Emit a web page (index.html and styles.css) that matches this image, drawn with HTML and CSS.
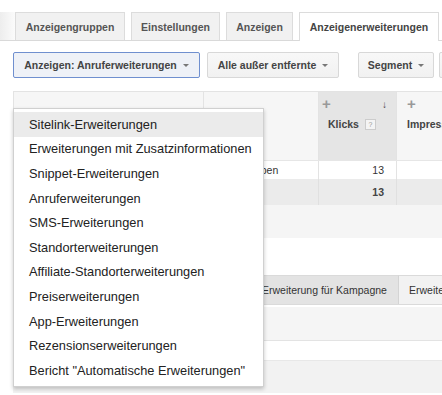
FILE: index.html
```html
<!DOCTYPE html>
<html lang="de">
<head>
<meta charset="utf-8">
<title>Anzeigenerweiterungen</title>
<link rel="stylesheet" href="styles.css">
</head>
<body>
<div class="page">
  <div class="tabs">
    <div class="tabs-lead"></div>
    <div class="tab tab-1">Anzeigengruppen</div>
    <div class="tab tab-2">Einstellungen</div>
    <div class="tab tab-3">Anzeigen</div>
    <div class="tab tab-4 tab-active">Anzeigenerweiterungen</div>
  </div>

  <div class="toolbar">
    <div class="btn btn-view">Anzeigen: Anruferweiterungen <span class="caret"></span></div>
    <div class="btn btn-filter">Alle außer entfernte <span class="caret"></span></div>
    <div class="sep"></div>
    <div class="btn btn-segment">Segment <span class="caret"></span></div>
    <div class="btn btn-more"></div>
  </div>

  <div class="grid">
    <div class="row row-head">
      <div class="cell c1"></div>
      <div class="cell c2"></div>
      <div class="cell c3 sorted">
        <div class="head-top"><span class="plus">+</span><span class="sort">&#8595;</span></div>
        <div class="head-label">Klicks <span class="help">?</span></div>
      </div>
      <div class="cell c4">
        <div class="head-top"><span class="plus">+</span></div>
        <div class="head-label">Impressionen</div>
      </div>
    </div>
    <div class="row row-data">
      <div class="cell c1"></div>
      <div class="cell c2">Werbegruppen</div>
      <div class="cell c3 num">13</div>
      <div class="cell c4"></div>
    </div>
    <div class="row row-total">
      <div class="cell c1"></div>
      <div class="cell c2"></div>
      <div class="cell c3 num">13</div>
      <div class="cell c4"></div>
    </div>
    <div class="row row-sub"></div>
  </div>

  <div class="gap"></div>

  <div class="subtabs">
    <div class="subtab subtab-a"></div>
    <div class="subtab subtab-b">Erweiterung für Kampagne</div>
    <div class="subtab subtab-c">Erweiterung für Konto</div>
  </div>
  <div class="band band-grey"></div>
  <div class="band band-white"></div>
  <div class="band band-foot"></div>

  <ul class="menu">
    <li class="menu-item is-hover">Sitelink-Erweiterungen</li>
    <li class="menu-item">Erweiterungen mit Zusatzinformationen</li>
    <li class="menu-item">Snippet-Erweiterungen</li>
    <li class="menu-item">Anruferweiterungen</li>
    <li class="menu-item">SMS-Erweiterungen</li>
    <li class="menu-item">Standorterweiterungen</li>
    <li class="menu-item">Affiliate-Standorterweiterungen</li>
    <li class="menu-item">Preiserweiterungen</li>
    <li class="menu-item">App-Erweiterungen</li>
    <li class="menu-item">Rezensionserweiterungen</li>
    <li class="menu-item">Bericht "Automatische Erweiterungen"</li>
  </ul>
</div>
</body>
</html>
```

FILE: styles.css
```css
html, body {
  margin: 0;
  padding: 0;
  background: #fff;
}
body {
  width: 442px;
  height: 395px;
  overflow: hidden;
  font-family: "Liberation Sans", Arial, sans-serif;
  color: #333;
}
.page {
  position: relative;
  width: 442px;
  height: 395px;
  overflow: hidden;
}

/* top tabs */
.tabs {
  display: flex;
  height: 41px;
  box-sizing: border-box;
  padding-top: 12px;
  border-bottom: 1px solid #d9d9d9;
}
.tabs-lead {
  width: 15px;
  flex: none;
  background: linear-gradient(to right, #ededed, #fbfbfb);
}
.tab {
  flex: none;
  display: flex;
  align-items: center;
  justify-content: center;
  box-sizing: border-box;
  height: 28px;
  margin-right: 6px;
  border: 1px solid #dcdcdc;
  border-bottom: 0;
  background: #f1f1f1;
  font-size: 10.5px;
  font-weight: bold;
  color: #555;
  white-space: nowrap;
}
.tab-1 { width: 110px; }
.tab-2 { width: 89px; }
.tab-3 { width: 67px; }
.tab-4 { width: 140px; }
.tab-active {
  background: #fff;
  height: 29px;
  margin-bottom: -1px;
  color: #444;
}

/* toolbar */
.toolbar {
  display: flex;
  align-items: center;
  height: 30px;
  margin-top: 9px;
  padding-left: 13px;
}
.btn {
  flex: none;
  display: flex;
  align-items: center;
  justify-content: center;
  box-sizing: border-box;
  height: 26px;
  border: 1px solid #d8d8d8;
  border-radius: 2px;
  background: linear-gradient(#f8f8f8, #f1f1f1);
  font-size: 10.5px;
  font-weight: bold;
  color: #444;
  white-space: nowrap;
}
.btn-view {
  width: 187px;
  border-color: #6f8fcf;
  background: #eef1f7;
  margin-right: 7px;
}
.btn-filter { width: 132px; }
.btn-segment { width: 76px; margin-right: 5px; }
.btn-more { width: 40px; }
.sep {
  width: 1px;
  height: 30px;
  background: #e0e0e0;
  margin: 0 9px 0 10px;
}
.caret {
  display: inline-block;
  width: 0;
  height: 0;
  margin-left: 6px;
  border-left: 3px solid transparent;
  border-right: 3px solid transparent;
  border-top: 3px solid #777;
}

/* grid */
.grid {
  margin-top: 11px;
  margin-left: 13px;
  border-top: 1px solid #e3e3e3;
  border-left: 1px solid #e3e3e3;
}
.row {
  display: flex;
}
.cell {
  flex: none;
  box-sizing: border-box;
  font-size: 10.5px;
  color: #333;
}
.c1 { width: 190px; border-right: 1px solid #e3e3e3; }
.c2 { width: 114px; padding-left: 5px; }
.c3 { width: 79px; border-left: 1px solid #e3e3e3; border-right: 1px solid #e3e3e3; }
.c4 { width: 60px; }
.row-head {
  height: 68px;
  background: #f6f6f6;
  border-bottom: 1px solid #e6e6e6;
}
.row-head .cell { padding-top: 5px; }
.sorted { background: #e5e5e5; padding-left: 3px; padding-right: 9px; }
.row-head .c4 { padding-left: 10px; }
.head-top {
  display: flex;
  justify-content: space-between;
  align-items: center;
  height: 14px;
}
.plus {
  font-size: 15px;
  font-weight: bold;
  color: #999;
  line-height: 14px;
}
.sort {
  font-size: 10px;
  font-weight: bold;
  color: #444;
}
.head-label {
  display: flex;
  align-items: center;
  margin-top: 7px;
  padding-left: 6px;
  font-weight: bold;
  color: #444;
  white-space: nowrap;
}
.row-head .c4 .head-label { padding-left: 0; }
.help {
  display: inline-flex;
  align-items: center;
  justify-content: center;
  width: 9px;
  height: 9px;
  margin-left: 6px;
  border: 1px solid #ccc;
  background: #f4f4f4;
  font-size: 7px;
  font-weight: normal;
  color: #999;
}
.row-data {
  height: 18px;
  background: #fff;
  align-items: center;
}
.row-data .cell { line-height: 18px; white-space: nowrap; }
.row-data .c3, .row-data .c1 { height: 18px; }
.num { text-align: right; padding-right: 12px; }
.row-total {
  height: 26px;
  background: #ebebeb;
}
.row-total .cell { line-height: 26px; }
.row-total .num { font-weight: bold; color: #444; }
.row-total .c3 { border-color: #e0e0e0; }
.row-sub {
  height: 33px;
  background: #f5f5f5;
}

.gap { height: 37px; }

/* lower tabs */
.subtabs {
  display: flex;
  height: 30px;
  margin-left: 13px;
  border-left: 1px solid #d8c6a6;
  border-bottom: 1px solid #dadada;
  box-sizing: border-box;
}
.subtab {
  flex: none;
  display: flex;
  align-items: center;
  box-sizing: border-box;
  font-size: 10.5px;
  color: #333;
  white-space: nowrap;
  border-top: 1px solid #dadada;
  border-right: 1px solid #d4d4d4;
}
.subtab-a { width: 238px; background: #f1f1f1; padding-left: 10px; }
.subtab-b { width: 147px; background: #e3e3e3; padding-left: 10px; }
.subtab-c { width: 120px; background: #f2f2f2; padding-left: 10px; }

.band {
  margin-left: 13px;
}
.band-grey {
  height: 33px;
  background: #f5f5f5;
  border-top: 2px solid #fff;
  border-bottom: 1px solid #e3e3e3;
}
.band-white {
  height: 19px;
  background: #fff;
  border-bottom: 1px solid #e8e8e8;
}
.band-foot {
  height: 32px;
  background: #f2f2f2;
}

/* dropdown */
.menu {
  position: absolute;
  left: 13px;
  top: 108px;
  width: 251px;
  box-sizing: border-box;
  margin: 0;
  padding: 3px 0;
  list-style: none;
  background: #fff;
  border: 1px solid #d0d0d0;
  box-shadow: 0 2px 4px rgba(0, 0, 0, 0.22);
}
.menu-item {
  display: flex;
  align-items: center;
  height: 24.6px;
  padding-left: 15px;
  font-size: 12.8px;
  color: #222;
  white-space: nowrap;
}
.is-hover {
  background: #ebebeb;
}
```
